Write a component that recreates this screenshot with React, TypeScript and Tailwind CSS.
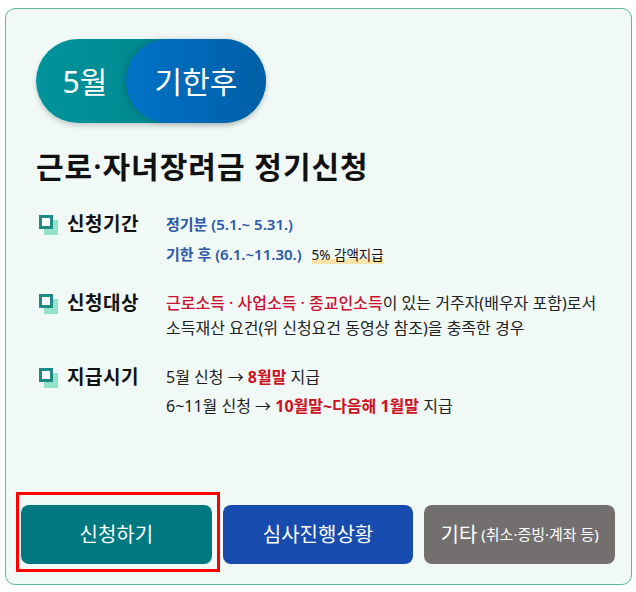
import React from "react";

// 항목 앞 네모 아이콘
const BoxIcon: React.FC = () => (
  <svg width="19" height="20" viewBox="0 0 19 20" className="shrink-0">
    <rect x="5" y="5" width="14" height="15" fill="#93e2cc" />
    <rect x="1.5" y="1.5" width="11" height="11" fill="#ffffff" stroke="#1e8a88" strokeWidth="3" />
  </svg>
);

interface RowProps {
  label: string;
  children: React.ReactNode;
}

const InfoRow: React.FC<RowProps> = ({ label, children }) => (
  <div className="flex">
    <div className="flex h-[25px] w-[130px] shrink-0 items-center">
      <div className="ml-[3px] w-[28px]">
        <BoxIcon />
      </div>
      <span className="text-[19px] font-bold tracking-[0.5px] text-[#111]">{label}</span>
    </div>
    <div className="flex-1 text-[16px] leading-[25px] text-[#222]">{children}</div>
  </div>
);

const App: React.FC = () => {
  return (
    <div
      className="pl-[5px] pt-[8px]"
      style={{ fontFamily: '"Noto Sans", "Noto Sans CJK KR", sans-serif' }}
    >
      <div className="flex h-[577px] w-[627px] flex-col rounded-[10px] border border-[#5cb89e] bg-[#f0f9f6]">
        <div className="pl-[30px] pt-[30px]">
          {/* 5월 / 기한후 */}
          <div className="flex h-[84px] w-[230px] rounded-full bg-gradient-to-r from-[#00949c] to-[#007d84] text-white shadow-[0_3px_5px_rgba(0,0,0,0.18)]">
            <span className="flex w-[90px] items-center justify-center pl-[8px] text-[30px]">5월</span>
            <span className="flex flex-1 items-center justify-center rounded-full bg-gradient-to-r from-[#0073c8] to-[#005fa6] text-[30px] shadow-[-2px_0_6px_rgba(0,0,0,0.15)]">
              기한후
            </span>
          </div>

          <h1 className="mt-[24px] text-[30px] font-semibold leading-[40px] tracking-[1px] text-[#111]">
            근로·자녀장려금 정기신청
          </h1>

          <div className="mt-[25px] flex flex-col gap-[24px]">
            <InfoRow label="신청기간">
              <div className="flex flex-col gap-[5px]">
                <p className="text-[15px] font-semibold text-[#2b58a6]">정기분 (5.1.~ 5.31.)</p>
                <p>
                  <span className="text-[15px] font-semibold text-[#2b58a6]">기한 후 (6.1.~11.30.)</span>
                  <span className="ml-[10px] inline-block text-[13.5px] leading-[18px] text-[#111] shadow-[inset_0_-5px_0_#fae4aa]">
                    5% 감액지급
                  </span>
                </p>
              </div>
            </InfoRow>

            <InfoRow label="신청대상">
              <p>
                <span className="font-medium text-[#cc1130]">근로소득 · 사업소득 · 종교인소득</span>이 있는
                거주자(배우자 포함)로서
                <br />
                소득재산 요건(위 신청요건 동영상 참조)을 충족한 경우
              </p>
            </InfoRow>

            <InfoRow label="지급시기">
              <div className="flex flex-col gap-[4px]">
                <p>
                  5월 신청 → <span className="font-bold text-[#cc1122]">8월말</span> 지급
                </p>
                <p>
                  6~11월 신청 → <span className="font-bold text-[#cc1122]">10월말~다음해 1월말</span> 지급
                </p>
              </div>
            </InfoRow>
          </div>
        </div>

        {/* 하단 버튼 */}
        <div className="mt-auto grid grid-cols-3 gap-[11px] pb-[20px] pl-[15px] pr-[16px]">
          <div className="relative">
            <button className="flex h-[59px] w-full items-center justify-center rounded-[8px] bg-[#007880] text-[20px] text-white">
              신청하기
            </button>
            <span className="pointer-events-none absolute -bottom-[8px] -left-[5px] -right-[8px] -top-[13px] border-[3px] border-[#ff0000]" />
          </div>
          <button className="flex h-[59px] items-center justify-center rounded-[8px] bg-[#174cae] text-[20px] text-white">
            심사진행상황
          </button>
          <button className="flex h-[59px] items-center justify-center gap-[4px] rounded-[8px] bg-[#746f6f] text-white">
            <span className="text-[20px]">기타</span>
            <span className="text-[15px]">(취소·증빙·계좌 등)</span>
          </button>
        </div>
      </div>
    </div>
  );
};

export default App;
